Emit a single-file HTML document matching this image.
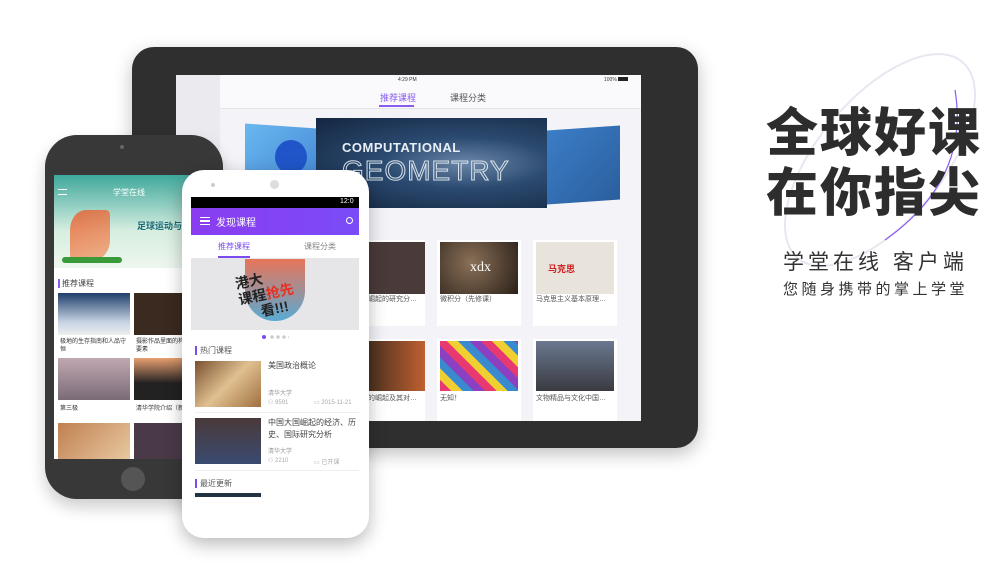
<!DOCTYPE html>
<html><head><meta charset="utf-8"><style>
*{margin:0;padding:0;box-sizing:border-box}
body{width:986px;height:584px;background:#fff;position:relative;overflow:hidden;font-family:"Liberation Sans","Noto Sans CJK SC",sans-serif;color:#333}
.a{position:absolute}
.cn{font-family:"Liberation Sans","Noto Sans CJK SC",sans-serif}
</style></head><body>

<!-- tablet -->
<div class="a" style="left:132px;top:47px;width:566px;height:401px;background:#2f2f2f;border-radius:22px;box-shadow:0 6px 18px rgba(0,0,0,.25)"></div>
<div class="a" style="left:176px;top:75px;width:465px;height:346px;background:#f4f4f8"></div>
<div class="a" style="left:176px;top:75px;width:44px;height:346px;background:#ebebef"></div>
<div class="a" style="left:220px;top:75px;width:421px;height:34px;background:#fafafc;border-bottom:1px solid #e6e6ea"></div>
<div class="a" style="left:398px;top:77px;font-size:5px;color:#333">4:29 PM</div>
<div class="a" style="left:604px;top:77px;font-size:5px;color:#333">100% <span style="display:inline-block;width:10px;height:4px;background:#222"></span></div>
<div class="a" style="left:380px;top:91px;font-size:9px;color:#8a5cf0">推荐课程</div>
<div class="a" style="left:379px;top:105px;width:35px;height:2px;background:#8a5cf0"></div>
<div class="a" style="left:450px;top:91px;font-size:9px;color:#555">课程分类</div>
<!-- carousel -->
<div class="a" style="left:245px;top:126px;width:72px;height:74px;background:linear-gradient(135deg,#6ab8f0,#3f80d0);transform:skewY(4deg)"></div>
<div class="a" style="left:275px;top:140px;width:32px;height:34px;border-radius:50%;background:#1f55c8"></div>
<div class="a" style="left:547px;top:128px;width:73px;height:74px;background:linear-gradient(135deg,#3b7dc6,#2b5f9e);transform:skewY(-4deg)"></div>
<div class="a" style="left:316px;top:118px;width:231px;height:90px;background:radial-gradient(ellipse at 65% 50%,#6a86a8 0%,#2b4a70 40%,#142640 100%)"></div>
<div class="a" style="left:342px;top:140px;font-size:13px;font-weight:bold;color:#e8eef4;letter-spacing:.5px">COMPUTATIONAL</div>
<div class="a" style="left:342px;top:155px;font-size:28px;color:transparent;-webkit-text-stroke:1px #d8e2ea;letter-spacing:1px">GEOMETRY</div>
<!-- tablet cards -->
<div class="a" style="left:366px;top:240px;width:59px;height:86px;background:#fff"></div>
<div class="a" style="left:369px;top:242px;width:56px;height:52px;background:#4a3a3a"></div>
<div class="a" style="left:368px;top:294px;font-size:7px;color:#555">崛起的研究分…</div>
<div class="a" style="left:437px;top:240px;width:84px;height:86px;background:#fff"></div>
<div class="a" style="left:440px;top:242px;width:78px;height:52px;background:radial-gradient(circle at 40% 40%,#8a7058,#2a2018)"></div>
<div class="a" style="left:470px;top:260px;font-size:14px;color:#fff;font-family:'Liberation Serif',serif">xdx</div>
<div class="a" style="left:440px;top:294px;font-size:7px;color:#555">微积分（先修课）</div>
<div class="a" style="left:533px;top:240px;width:84px;height:86px;background:#fff"></div>
<div class="a" style="left:536px;top:242px;width:78px;height:52px;background:#e8e4dc"></div>
<div class="a" style="left:548px;top:262px;font-size:9px;color:#d02020;font-weight:bold">马克思</div>
<div class="a" style="left:536px;top:294px;font-size:7px;color:#555">马克思主义基本原理…</div>
<div class="a" style="left:366px;top:339px;width:59px;height:82px;background:#fff"></div>
<div class="a" style="left:369px;top:341px;width:56px;height:50px;background:linear-gradient(90deg,#4a3020,#c06030)"></div>
<div class="a" style="left:368px;top:393px;font-size:7px;color:#555">的崛起及其对…</div>
<div class="a" style="left:437px;top:339px;width:84px;height:82px;background:#fff"></div>
<div class="a" style="left:440px;top:341px;width:78px;height:50px;background:repeating-linear-gradient(45deg,#e83a70 0 8px,#f0d030 8px 16px,#3a8ad0 16px 24px,#8a40c0 24px 32px)"></div>
<div class="a" style="left:440px;top:393px;font-size:7px;color:#555">无知！</div>
<div class="a" style="left:533px;top:339px;width:84px;height:82px;background:#fff"></div>
<div class="a" style="left:536px;top:341px;width:78px;height:50px;background:linear-gradient(180deg,#6a7890,#3a3a40)"></div>
<div class="a" style="left:536px;top:393px;font-size:7px;color:#555">文物精品与文化中国…</div>

<!-- iPhone -->
<div class="a" style="left:45px;top:135px;width:178px;height:364px;background:#383838;border-radius:32px;box-shadow:0 8px 16px rgba(0,0,0,.2)"></div>
<div class="a" style="left:120px;top:145px;width:4px;height:4px;border-radius:50%;background:#666"></div>
<div class="a" style="left:54px;top:175px;width:160px;height:284px;background:#fff"></div>
<div class="a" style="left:54px;top:175px;width:160px;height:93px;background:linear-gradient(180deg,#3fa89c,#d6eee0 60%,#eef6ee)"></div>
<div class="a" style="left:113px;top:187px;font-size:8px;color:#fff">学堂在线</div>
<div class="a" style="left:58px;top:189px;width:9px;height:6px;border-top:1px solid #fff;border-bottom:1px solid #fff"></div>
<div class="a" style="left:137px;top:219px;font-size:9px;color:#1d6a78;font-weight:bold">足球运动与</div>
<div class="a" style="left:70px;top:210px;width:40px;height:50px;background:linear-gradient(160deg,#e85a2a,#f0a070);border-radius:40% 10%;opacity:.8"></div>
<div class="a" style="left:62px;top:257px;width:60px;height:6px;background:#3a9a3a;border-radius:3px"></div>
<div class="a" style="left:58px;top:279px;width:2px;height:9px;background:#8a5cf0"></div>
<div class="a" style="left:62px;top:278px;font-size:8px;color:#444">推荐课程</div>
<div class="a" style="left:58px;top:293px;width:72px;height:42px;background:linear-gradient(180deg,#1f3e6a,#c8d4e4 70%,#eee)"></div>
<div class="a" style="left:134px;top:293px;width:56px;height:42px;background:#3a2a20"></div>
<div class="a" style="left:60px;top:338px;font-size:6px;color:#333;width:70px;line-height:8px">极地的生存指南和人品守恒</div>
<div class="a" style="left:136px;top:338px;font-size:6px;color:#333;width:54px;line-height:8px">摄影作品里面的构三要素</div>
<div class="a" style="left:58px;top:358px;width:72px;height:42px;background:linear-gradient(180deg,#c0a8b0,#7a6a78)"></div>
<div class="a" style="left:134px;top:358px;width:56px;height:42px;background:linear-gradient(180deg,#e8a070,#222 60%)"></div>
<div class="a" style="left:60px;top:403px;font-size:6px;color:#333">第三极</div>
<div class="a" style="left:136px;top:403px;font-size:6px;color:#333">清华学院介绍（新</div>
<div class="a" style="left:58px;top:423px;width:72px;height:36px;background:linear-gradient(135deg,#c08050,#e8c8a0)"></div>
<div class="a" style="left:134px;top:423px;width:56px;height:36px;background:#4a3a48"></div>
<div class="a" style="left:121px;top:467px;width:24px;height:24px;border-radius:50%;background:#555"></div>

<!-- Android -->
<div class="a" style="left:182px;top:170px;width:187px;height:368px;background:#fff;border-radius:22px;box-shadow:0 6px 18px rgba(0,0,0,.28)"></div>
<div class="a" style="left:270px;top:180px;width:9px;height:9px;border-radius:50%;background:#ddd"></div>
<div class="a" style="left:211px;top:183px;width:4px;height:4px;border-radius:50%;background:#ccc"></div>
<div class="a" style="left:191px;top:197px;width:168px;height:11px;background:#000"></div>
<div class="a" style="left:340px;top:198px;font-size:7px;color:#fff">12:0</div>
<div class="a" style="left:191px;top:208px;width:168px;height:27px;background:linear-gradient(90deg,#8a3cf0,#7a4cf8)"></div>
<div class="a" style="left:200px;top:217px;width:10px;height:8px;border-top:1.5px solid #fff;border-bottom:1.5px solid #fff"><div style="margin-top:2px;height:1.5px;background:#fff"></div></div>
<div class="a" style="left:216px;top:214px;font-size:10px;color:#fff">发现课程</div>
<div class="a" style="left:346px;top:217px;width:7px;height:7px;border:1.5px solid #fff;border-radius:50%"></div>
<div class="a" style="left:218px;top:241px;font-size:8px;color:#7a4cf0">推荐课程</div>
<div class="a" style="left:218px;top:256px;width:32px;height:2px;background:#7a4cf0"></div>
<div class="a" style="left:304px;top:241px;font-size:8px;color:#888">课程分类</div>
<div class="a" style="left:191px;top:258px;width:168px;height:72px;background:#e6e6e8"></div>
<div class="a" style="left:245px;top:259px;width:60px;height:62px;background:linear-gradient(180deg,#e86040,#40a0d0);border-radius:0 0 30px 30px;opacity:.85"></div>
<div class="a" style="left:238px;top:270px;font-size:14px;font-weight:bold;color:#222;line-height:16px;transform:rotate(-12deg)">港大<br>课程<span style="color:#e83020">抢先</span><br>&nbsp;&nbsp;&nbsp;&nbsp;&nbsp;看!!!</div>
<div class="a" style="left:262px;top:335px;width:4px;height:4px;border-radius:50%;background:#7a4cf0"></div>
<div class="a" style="left:269px;top:335px;width:20px;height:4px;background:radial-gradient(circle,#ccc 1.5px,transparent 2px) 0 0/6px 4px"></div>
<div class="a" style="left:195px;top:346px;width:2px;height:9px;background:#7a4cf0"></div>
<div class="a" style="left:200px;top:345px;font-size:8px;color:#555">热门课程</div>
<div class="a" style="left:195px;top:361px;width:66px;height:46px;background:linear-gradient(135deg,#7a5030,#e0c090 50%,#a07040)"></div>
<div class="a" style="left:268px;top:360px;font-size:8px;color:#444">美国政治概论</div>
<div class="a" style="left:268px;top:388px;font-size:6px;color:#999">清华大学</div>
<div class="a" style="left:268px;top:399px;font-size:6px;color:#aaa">⚇ 9591</div>
<div class="a" style="left:314px;top:399px;font-size:6px;color:#aaa">▭ 2015-11-21</div>
<div class="a" style="left:195px;top:412px;width:164px;height:1px;background:#eee"></div>
<div class="a" style="left:195px;top:418px;width:66px;height:46px;background:linear-gradient(180deg,#4a3a3a,#3a4a70)"></div>
<div class="a" style="left:268px;top:417px;font-size:8px;color:#444;line-height:12px;width:90px">中国大国崛起的经济、历史、国际研究分析</div>
<div class="a" style="left:268px;top:446px;font-size:6px;color:#999">清华大学</div>
<div class="a" style="left:268px;top:457px;font-size:6px;color:#aaa">⚇ 2210</div>
<div class="a" style="left:314px;top:457px;font-size:6px;color:#aaa">▭ 已开课</div>
<div class="a" style="left:195px;top:470px;width:164px;height:1px;background:#eee"></div>
<div class="a" style="left:195px;top:479px;width:2px;height:9px;background:#7a4cf0"></div>
<div class="a" style="left:200px;top:478px;font-size:8px;color:#555">最近更新</div>
<div class="a" style="left:195px;top:493px;width:66px;height:4px;background:#234"></div>

<!-- right decorative ellipse -->
<svg class="a" style="left:740px;top:50px" width="246" height="260"><ellipse cx="140" cy="110" rx="62" ry="128" transform="rotate(40 140 110)" fill="none" stroke="#e8e6f0" stroke-width="2"/><path d="M215 40 Q230 130 145 190" fill="none" stroke="#8a5cf0" stroke-width="1.2"/></svg>

<div class="a cn" style="left:766px;top:104px;font-size:52px;font-weight:900;color:#2d2d2d;letter-spacing:2px;line-height:60px;white-space:nowrap">全球好课<br>在你指尖</div>
<div class="a cn" style="left:783px;top:246px;font-size:21px;color:#333;letter-spacing:4px;white-space:nowrap">学堂在线 客户端</div>
<div class="a cn" style="left:783px;top:278px;font-size:15px;color:#333;letter-spacing:3.5px;white-space:nowrap">您随身携带的掌上学堂</div>
</body></html>
